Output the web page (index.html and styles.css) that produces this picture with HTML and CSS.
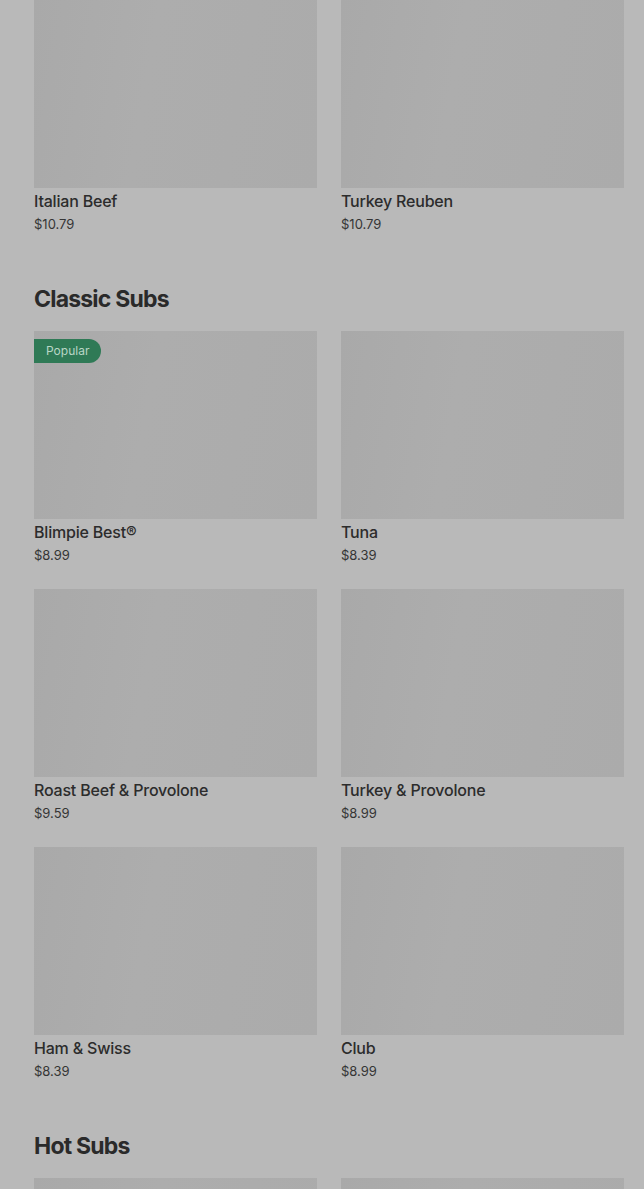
FILE: index.html
```html
<!DOCTYPE html>
<html>
<head>
<meta charset="utf-8">
<link rel="stylesheet" href="styles.css">
</head>
<body>
<main class="menu">
  <section class="section first">
    <div class="grid">
      <div class="item"><div class="thumb"></div><div class="name">Italian Beef</div><div class="price">$10.79</div></div>
      <div class="item"><div class="thumb"></div><div class="name">Turkey Reuben</div><div class="price">$10.79</div></div>
    </div>
  </section>
  <section class="section">
    <h2 class="heading">Classic Subs</h2>
    <div class="grid">
      <div class="item"><div class="thumb"><span class="badge">Popular</span></div><div class="name">Blimpie Best®</div><div class="price">$8.99</div></div>
      <div class="item"><div class="thumb"></div><div class="name">Tuna</div><div class="price">$8.39</div></div>
      <div class="item"><div class="thumb"></div><div class="name">Roast Beef &amp; Provolone</div><div class="price">$9.59</div></div>
      <div class="item"><div class="thumb"></div><div class="name">Turkey &amp; Provolone</div><div class="price">$8.99</div></div>
      <div class="item"><div class="thumb"></div><div class="name">Ham &amp; Swiss</div><div class="price">$8.39</div></div>
      <div class="item"><div class="thumb"></div><div class="name">Club</div><div class="price">$8.99</div></div>
    </div>
  </section>
  <section class="section">
    <h2 class="heading">Hot Subs</h2>
    <div class="grid">
      <div class="item"><div class="thumb"></div></div>
      <div class="item"><div class="thumb"></div></div>
    </div>
  </section>
</main>
</body>
</html>
```
FILE: styles.css
```css
html, body {
  margin: 0;
  padding: 0;
  background: #b9b9b9;
  overflow: hidden;
}
body {
  font-family: Inter, "Noto Sans", sans-serif;
  color: #2c2c2c;
}
.menu {
  padding: 0 20px 0 34px;
}
.section {
  margin-top: 49px;
}
.section.first {
  margin-top: 0;
}
.heading {
  margin: 0 0 16px;
  font-size: 23px;
  line-height: 32px;
  font-weight: 700;
  letter-spacing: -0.8px;
  color: #2a2a2a;
}
.grid {
  display: grid;
  grid-template-columns: 283px 283px;
  column-gap: 24px;
  row-gap: 24px;
}
.thumb {
  position: relative;
  height: 188px;
  background: linear-gradient(100deg, #a9a9a9 0%, #adadad 40%, #ababab 100%);
}
.badge {
  position: absolute;
  left: 0;
  top: 8px;
  height: 24px;
  line-height: 24px;
  padding: 0 12px;
  background: #2f7a56;
  color: #b9d6c6;
  font-size: 12px;
  border-radius: 0 12px 12px 0;
}
.name {
  margin-top: 3px;
  font-size: 16px;
  line-height: 20px;
  font-weight: 500;
  letter-spacing: -0.2px;
  color: #2c2c2c;
}
.price {
  margin-top: 3px;
  font-size: 13px;
  line-height: 20px;
  color: #353535;
}
```
